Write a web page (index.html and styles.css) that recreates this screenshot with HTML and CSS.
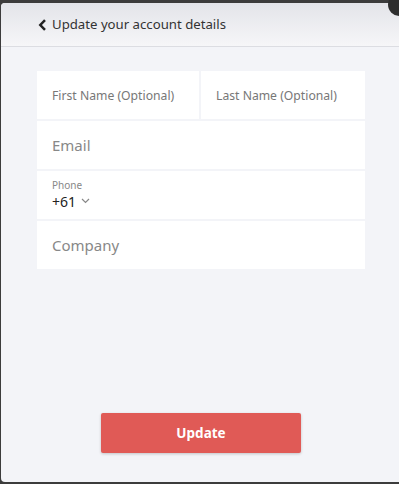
FILE: index.html
```html
<!DOCTYPE html>
<html>
<head>
<meta charset="utf-8">
<link rel="stylesheet" href="styles.css">
</head>
<body>
<div class="modal">
  <span class="close"></span>
  <div class="header">
    <svg class="back" width="9" height="12" viewBox="0 0 9 12"><polyline points="7,1.2 2.3,6 7,10.8" fill="none" stroke="#222" stroke-width="2.5"/></svg>
    <span class="title">Update your account details</span>
  </div>
  <div class="content">
    <div class="form">
      <div class="row split">
        <div class="cell small first">First Name (Optional)</div>
        <div class="cell small">Last Name (Optional)</div>
      </div>
      <div class="row"><div class="cell big">Email</div></div>
      <div class="row"><div class="cell phone">
        <span class="label">Phone</span>
        <span class="code">+61 <svg width="9" height="6" viewBox="0 0 9 6"><polyline points="1,1 4.5,4.5 8,1" fill="none" stroke="#888" stroke-width="1.2"/></svg></span>
      </div></div>
      <div class="row"><div class="cell big">Company</div></div>
    </div>
    <div class="actions">
      <button class="btn">Update</button>
    </div>
  </div>
</div>
</body>
</html>
```
FILE: styles.css
```css
html, body { margin: 0; padding: 0; }
body {
  background: #3c3c3c;
  width: 399px;
  height: 484px;
  overflow: hidden;
  font-family: "Noto Sans", "Open Sans", sans-serif;
}
.modal {
  position: relative;
  margin: 3px 0 0 1px;
  width: 398px;
  height: 479px;
  background: #f3f4f8;
  border-radius: 4px 0 0 4px;
  display: flex;
  flex-direction: column;
}
.close {
  position: absolute;
  right: -12px;
  top: -10px;
  width: 23px;
  height: 23px;
  border-radius: 50%;
  background: #2e2e2e;
}
.header {
  height: 44px;
  box-sizing: border-box;
  border-bottom: 1px solid #dcdde2;
  background: linear-gradient(#e3e4e9, #f6f6f8);
  border-radius: 4px 0 0 0;
  display: flex;
  align-items: center;
  padding-left: 37px;
  padding-bottom: 1px;
}
.back { margin-right: 5px; margin-top: 1px; }
.title { font-size: 13.2px; color: #333; }
.content {
  flex: 1;
  display: flex;
  flex-direction: column;
  padding: 24px 34px 29px 36px;
}
.form {
  display: flex;
  flex-direction: column;
  gap: 2px;
}
.row {
  display: flex;
  gap: 2px;
  height: 48px;
}
.cell {
  flex: 1;
  background: #fff;
  display: flex;
  align-items: center;
  padding-left: 15px;
}
.first { flex: 0 0 147px; }
.small { font-size: 12.2px; color: #777; }
.big { font-size: 15px; color: #888; padding-bottom: 1px; }
.phone {
  flex-direction: column;
  align-items: flex-start;
  justify-content: center;
  padding-bottom: 1px;
}
.label { font-size: 10px; color: #888; line-height: 13px; }
.code { font-size: 14px; color: #222; line-height: 19px; display: flex; align-items: center; gap: 5px; }
.actions {
  margin-top: auto;
  display: flex;
  justify-content: center;
}
.btn {
  width: 200px;
  height: 40px;
  border: none;
  border-radius: 2px;
  background: #e05a56;
  color: #fff;
  font-family: "Noto Sans", "Open Sans", sans-serif;
  font-weight: bold;
  font-size: 13.5px;
  box-shadow: 0 1px 3px rgba(0,0,0,0.2);
}
```
